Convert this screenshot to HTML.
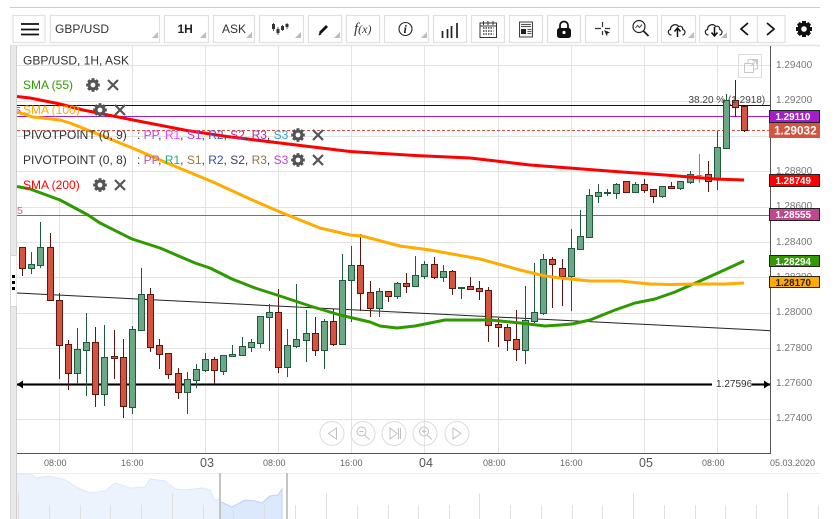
<!DOCTYPE html>
<html><head><meta charset="utf-8"><title>GBP/USD</title>
<style>
html,body{margin:0;padding:0;background:#fff;width:835px;height:519px;overflow:hidden}
svg{display:block;font-family:"Liberation Sans",sans-serif}
.b{fill:#fff;stroke:#e0e0e0;stroke-width:1.2}
.t{fill:#bbb}
.ax{font-size:10px;fill:#777}
.d{font-size:9px;fill:#666}
.D{font-size:12.5px;fill:#555}
.l{font-size:12px;fill:#333}
.p{font-size:9.8px;font-weight:bold;fill:#fff}
</style></head><body>
<svg width="835" height="519" viewBox="0 0 835 519" xmlns="http://www.w3.org/2000/svg">
<defs>
<g id="gear"><circle r="4" fill="none" stroke="currentColor" stroke-width="2.8"/><g fill="currentColor"><rect x="-1.5" y="-6.8" width="3" height="13.6"/><rect x="-1.5" y="-6.8" width="3" height="13.6" transform="rotate(45)"/><rect x="-1.5" y="-6.8" width="3" height="13.6" transform="rotate(90)"/><rect x="-1.5" y="-6.8" width="3" height="13.6" transform="rotate(135)"/></g><circle r="2.4" fill="#fff"/></g>
<path id="x" d="M-5-5L5 5M5-5L-5 5" fill="none" stroke="currentColor" stroke-width="2.2"/>
<path id="cloud" d="M-5.5 5C-9 5-10 0-6.5-.5C-6.5-5-1-7 1.5-3.5C4-4.5 6-3 5.8-.5C9 0 8.500 5 5.500 5" fill="none" stroke="#222" stroke-width="1.2"/>
</defs>
<rect width="835" height="519" fill="#fff"/>
<path d="M10 7.500H820" stroke="#ccc" stroke-width="1"/>
<path d="M10 45.500H820" stroke="#e4e4e4" stroke-width="1.500"/>

<!-- grid -->
<g stroke="#e3e3e3" stroke-width="1" fill="none">
<path d="M17 65.500H770M17 101.500H770M17 136.500H770M17 171.500H770M17 207.500H770M17 242.500H770M17 277.500H770M17 313.500H770M17 348.500H770M17 383.500H770M17 419.500H770"/>
<path d="M59.500 198V453M132.500 46V453M205.500 46V453M278.500 46V453M351.500 46V453M424.500 46V453M498.500 46V453M571.500 46V453M644.500 46V453M717.500 46V453"/>
</g>

<text x="15.500" y="114" font-size="10" fill="#a31fc9">5</text>

<!-- left band -->
<rect x="10" y="46" width="6" height="473" fill="#e9e9e9"/>
<path d="M16.500 46V519" stroke="#cfcfcf"/>
<path d="M10.500 46V519" stroke="#d8d8d8"/>
<rect x="11" y="255" width="5.500" height="51" fill="#fff"/>
<path d="M11 255.500H16M11 306.500H16" stroke="#d5d5d5"/>
<path d="M12 275h3v3h-3zM12 281h3v3h-3zM12 287h3v3h-3z" fill="#000"/>

<!-- horizontal levels -->
<path d="M17 105.500H770" stroke="#111"/>
<path d="M17 116.500H770" stroke="#a31fc9"/>
<path d="M17 130.500H770" stroke="#d9503a" stroke-dasharray="3 2"/>
<path d="M17 215.500H770" stroke="#b84a8e"/>
<text x="17" y="214" font-size="10.500" fill="#d060a0">5</text>

<!-- trend -->
<path d="M17 293L771 330.700" stroke="#222" stroke-width="1" fill="none"/>

<!-- support line -->
<path d="M17 384.500H770" stroke="#999" stroke-width="3"/>
<path d="M17 384.500H770" stroke="#000" stroke-width="1.500"/>
<path d="M17 384.500l6-4v8zM770 384.500l-6-4v8z" fill="#000"/>
<rect x="712" y="378" width="40" height="11" fill="#fff"/>
<text x="716" y="387" font-size="10" fill="#333">1.27596</text>

<!-- candles: wicks -->
<path fill="none" stroke="#1f5a3c" stroke-width="1" d="M31.500 252V274M40.500 222V268M77.500 328V384M86.500 313V396M104.500 325V406M132.500 326V414M141.500 268V330M187.500 372V414M196.500 364V388M205.500 353V372M223.500 355V375M232.500 345V357M242.500 337V356M251.500 339V352M260.500 316V348M269.500 304V351M287.500 329V377M296.500 284V348M306.500 310V362M324.500 319V369M342.500 254V344M351.500 246V322M379.500 288V317M397.500 282V299M415.500 256V286M424.500 261V279M443.500 265V282M461.500 287V299M525.500 286V364M534.500 263V323M543.500 254V315M571.500 229V311M580.500 210V249M589.500 189V237M598.500 184V203M607.500 189V196M616.500 183V199M635.500 182V192M662.500 186V198M680.500 181V190M690.500 171V184M717.500 131V190M726.500 94V148"/>
<path fill="none" stroke="#5f1510" stroke-width="1" d="M22.500 247V276M50.500 233V300M59.500 293V379M68.500 340V390M95.500 327V407M114.500 330V379M123.500 339V418M150.500 288V352M159.500 339V369M168.500 353V379M178.500 368V399M214.500 357V384M278.500 289V373M315.500 317V356M333.500 309V346M360.500 234V311M370.500 281V317M388.500 291V302M406.500 273V293M434.500 257V279M452.500 270V295M470.500 277V289M479.500 281V300M488.500 287V342M498.500 318V347M507.500 324V351M516.500 310V361M552.500 257V308M562.500 259V306M626.500 181V192M644.500 179V193M653.500 189V203M671.500 182V188M708.500 161V192M735.500 80V117M744.500 106V132"/>
<path fill="none" stroke="#888" stroke-width="1" d="M699.500 154V183M696.500 175.500h6"/>
<!-- candles: bodies -->
<path fill="#6ca786" stroke="#1f5a3c" stroke-width="1" d="M28.500 264.500h6v4h-6zM37.500 247.500h6v18h-6zM74.500 349.500h6v24h-6zM83.500 342.500h6v8h-6zM101.500 357.500h6v37h-6zM129.500 329.500h6v78h-6zM138.500 294.500h6v36h-6zM184.500 379.500h6v13h-6zM193.500 369.500h6v11h-6zM202.500 359.500h6v11h-6zM220.500 355.500h6v16h-6zM229.500 354.500h6v2h-6zM239.500 346.500h6v9h-6zM248.500 342.500h6v5h-6zM257.500 316.500h6v27h-6zM266.500 312.500h6v5h-6zM284.500 345.500h6v22h-6zM293.500 339.500h6v7h-6zM303.500 333.500h6v7h-6zM321.500 321.500h6v29h-6zM339.500 280.500h6v64h-6zM348.500 265.500h6v15h-6zM376.500 291.500h6v17h-6zM394.500 283.500h6v13h-6zM412.500 275.500h6v11h-6zM421.500 264.500h6v12h-6zM440.500 271.500h6v6h-6zM458.500 287.500h6v1h-6zM522.500 320.500h6v30h-6zM531.500 312.500h6v9h-6zM540.500 259.500h6v54h-6zM568.500 248.500h6v28h-6zM577.500 236.500h6v13h-6zM586.500 195.500h6v42h-6zM595.500 192.500h6v4h-6zM604.500 192.500h6v1h-6zM613.500 184.500h6v9h-6zM632.500 184.500h6v8h-6zM659.500 186.500h6v10h-6zM677.500 181.500h6v7h-6zM687.500 174.500h6v8h-6zM714.500 147.500h6v31h-6zM723.500 100.500h6v48h-6z"/>
<path fill="#d35440" stroke="#5f1510" stroke-width="1" d="M19.500 247.500h6v21h-6zM47.500 247.500h6v53h-6zM56.500 300.500h6v45h-6zM65.500 344.500h6v29h-6zM92.500 342.500h6v52h-6zM111.500 356.500h6v2h-6zM120.500 357.500h6v49h-6zM147.500 294.500h6v53h-6zM156.500 345.500h6v9h-6zM165.500 353.500h6v21h-6zM175.500 373.500h6v19h-6zM211.500 359.500h6v11h-6zM275.500 312.500h6v55h-6zM312.500 333.500h6v17h-6zM330.500 321.500h6v23h-6zM357.500 265.500h6v28h-6zM367.500 292.500h6v16h-6zM385.500 291.500h6v5h-6zM403.500 283.500h6v3h-6zM431.500 264.500h6v13h-6zM449.500 271.500h6v17h-6zM467.500 286.500h6v3h-6zM476.500 288.500h6v3h-6zM485.500 290.500h6v35h-6zM495.500 324.500h6v3h-6zM504.500 327.500h6v13h-6zM513.500 339.500h6v10h-6zM549.500 259.500h6v5h-6zM559.500 268.500h6v8h-6zM623.500 181.500h6v11h-6zM641.500 184.500h6v6h-6zM650.500 189.500h6v7h-6zM668.500 186.500h6v2h-6zM705.500 174.500h6v7h-6zM732.500 100.500h6v7h-6zM741.500 106.500h6v24h-6z"/>

<!-- moving averages -->
<g fill="none" stroke-width="3" stroke-linejoin="round" stroke-linecap="butt">
<path stroke="#2f9a00" d="M17 186.500L30 189L60 200L88 215L100 223L132 239L160 248L195 263L210 268L232 279L255 288L280 296L310 306L340 315L370 322L380 326L397 328L415 326L445 320L490 320L520 323L545 326L560 325L572 324L590 320L615 310L635 303L655 299L675 292L700 281L720 272L744 261"/>
<path stroke="#ffab00" d="M17 112L33 117L60 120L70 123L100 135L130 147L167 163L213 182L250 199L280 212L295 218L320 228L350 235L362 236L400 246L430 250L480 259L520 270L545 276L560 278L590 281L620 281L650 284L670 284.500L700 284L725 284L744 283"/>
<path stroke="#ff0000" d="M17 96.500L30 98L60 104L83 110L133 120L187 130.500L227 136.500L280 143L350 151.500L415 155.500L470 158L530 165L615 171.500L665 175L715 179L744 180"/>
</g>

<!-- chart frame -->
<path d="M770.500 46V453M17 453.500H771" stroke="#555" fill="none"/>

<!-- y labels -->
<g class="ax">
<text x="776" y="68">1.29400</text><text x="776" y="103">1.29200</text>
<text x="776" y="174">1.28800</text><text x="776" y="209">1.28600</text>
<text x="776" y="245">1.28400</text><text x="776" y="280">1.28200</text>
<text x="776" y="315">1.28000</text><text x="776" y="351">1.27800</text>
<text x="776" y="386">1.27600</text><text x="776" y="421">1.27400</text>
</g>

<!-- price tags -->
<rect x="769.500" y="110.500" width="50" height="12" fill="#a31fc9" stroke="#222"/>
<text x="775.500" y="120" class="p">1.29110</text>
<rect x="769" y="123" width="51" height="15" fill="#d35440"/>
<text x="774" y="134.500" font-size="11.800" font-weight="bold" fill="#fff">1.29032</text>
<rect x="769.500" y="174.500" width="50" height="12" fill="#f00" stroke="#222"/>
<text x="775.500" y="184" class="p">1.28749</text>
<rect x="769.500" y="208.500" width="50" height="12" fill="#c0488f" stroke="#222"/>
<text x="775.500" y="218" class="p">1.28555</text>
<rect x="769.500" y="255.500" width="50" height="11" fill="#339900" stroke="#222"/>
<text x="775.500" y="264.800" class="p">1.28294</text>
<rect x="769.500" y="276.500" width="50" height="11" fill="#ffab00" stroke="#222"/>
<text x="775.500" y="285.800" font-size="9.800" font-weight="bold" fill="#222">1.28170</text>

<!-- fib label -->
<text x="688.500" y="103" font-size="10" fill="#444">38.20 % (1.2918)</text>

<!-- popout -->
<rect x="738.500" y="54.500" width="23" height="23" fill="none" stroke="#ddd"/>
<g fill="none" stroke="#c8c8c8" stroke-width="1"><rect x="744.500" y="63.500" width="9" height="9"/><path d="M748 63V59.500h9.500V69H754M751 66l5-5M752.500 60.500h4v4"/></g>

<!-- legend -->
<text x="23" y="64.500" class="l">GBP/USD, 1H, ASK</text>
<text x="23" y="89" font-size="12" fill="#339900">SMA (55)</text>
<use href="#gear" x="93" y="85" color="#555"/><use href="#x" x="113" y="85" color="#555"/>
<text x="23" y="114" font-size="12" fill="#ffab00">SMA (100)</text>
<use href="#gear" x="100" y="110" color="#555"/><use href="#x" x="120" y="110" color="#555"/>
<text x="23" y="139" class="l">PIVOTPOINT (0, 9)</text>
<text x="137" y="139" class="l">: <tspan fill="#c040f0">PP</tspan>, <tspan fill="#f040f0">R1</tspan>, <tspan fill="#b040e0">S1</tspan>, <tspan fill="#5050d0">R2</tspan>, <tspan fill="#c03090">S2</tspan>, <tspan fill="#a030c0">R3</tspan>, <tspan fill="#30a0c8">S3</tspan></text>
<use href="#gear" x="298" y="135" color="#555"/><use href="#x" x="318" y="135" color="#555"/>
<text x="23" y="164" class="l">PIVOTPOINT (0, 8)</text>
<text x="137" y="164" class="l">: <tspan fill="#b85aa8">PP</tspan>, <tspan fill="#20b070">R1</tspan>, <tspan fill="#987838">S1</tspan>, <tspan fill="#3850b0">R2</tspan>, <tspan fill="#503868">S2</tspan>, <tspan fill="#987038">R3</tspan>, <tspan fill="#c040d0">S3</tspan></text>
<use href="#gear" x="298" y="160" color="#555"/><use href="#x" x="318" y="160" color="#555"/>
<text x="23" y="189" font-size="12" fill="#ff0000">SMA (200)</text>
<use href="#gear" x="100" y="185" color="#555"/><use href="#x" x="120" y="185" color="#555"/>

<!-- nav buttons -->
<g fill="none" stroke="#dcdcdc" stroke-width="1">
<circle cx="332" cy="433.500" r="12"/><circle cx="363" cy="433.500" r="12"/><circle cx="394" cy="433.500" r="12"/><circle cx="425" cy="433.500" r="12"/><circle cx="457" cy="433.500" r="12"/>
</g>
<g fill="none" stroke="#c0c0c0" stroke-width="1">
<path d="M336.500 428v11l-8-5.500z"/>
<circle cx="361.500" cy="431.500" r="4.500"/><path d="M364.500 435l5 4.500M359.500 431.500h4"/>
<path d="M390 428v11l7-5.500zM398.500 428v11M400.500 428v11"/>
<circle cx="424" cy="431.500" r="4.500"/><path d="M427 435l5 4.500M422 431.500h4M424 429.500v4"/>
<path d="M453 428v11l8-5.500z"/>
</g>

<!-- x labels -->
<g class="d"><text x="44" y="466">08:00</text><text x="121" y="466">16:00</text><text x="263" y="466">08:00</text><text x="340" y="466">16:00</text><text x="483" y="466">08:00</text><text x="560" y="466">16:00</text><text x="702" y="466">08:00</text><text x="770" y="466">05.03.2020</text></g>
<g class="D"><text x="200" y="467">03</text><text x="419" y="467">04</text><text x="639" y="467">05</text></g>
<path d="M17 473.500H820" stroke="#ececec"/>

<!-- navigator -->
<path d="M17 474L30 474L37 478L50 476L65 480L78 488L90 493L105 491L115 483L130 488L145 487L150 479L165 481L175 489L185 490L203 488L210 490L215 501L220 499V519H17Z" fill="#edf3fc" stroke="none"/>
<path d="M17 474L30 474L37 478L50 476L65 480L78 488L90 493L105 491L115 483L130 488L145 487L150 479L165 481L175 489L185 490L203 488L210 490L215 501L220 499" fill="none" stroke="#dbe7fa"/>
<path d="M221 502L232 507L245 500L255 501L262 503L270 496L278 495L282 489V519H221Z" fill="#dce8fb"/>
<path d="M221 502L232 507L245 500L255 501L262 503L270 496L278 495L282 489V519" fill="none" stroke="#b9d2f7"/>
<g stroke="#e0e0e0" fill="none"><path d="M18.500 493V519M172.500 493V519M326.500 493V519M479.500 493V519M633.500 493V519M787.500 493V519"/>
<path d="M49.500 505V519M80.500 505V519M110.500 505V519M141.500 505V519M203.500 505V519M233.500 505V519M264.500 505V519M295.500 505V519M357.500 505V519M388.500 505V519M418.500 505V519M449.500 505V519M510.500 505V519M541.500 505V519M572.500 505V519M602.500 505V519M664.500 505V519M695.500 505V519M725.500 505V519M756.500 505V519M818.500 505V519"/></g>
<path d="M220 473V519M287 473V519" stroke="#c4c4c4" stroke-width="2"/>

<!-- toolbar -->
<rect x="13" y="15.500" width="32" height="27" class="b"/>
<path d="M21 24h18M21 29.500h18M21 34.500h18" stroke="#111" stroke-width="1.700"/>
<rect x="50.500" y="15.500" width="109" height="27" class="b"/><path class="t" d="M158 38v-6l-6 6z"/>
<text x="55" y="33" class="l">GBP/USD</text>
<rect x="164.500" y="15.500" width="44" height="27" class="b"/><path class="t" d="M206 38v-6l-6 6z"/>
<text x="177.500" y="33" font-size="12" font-weight="bold" fill="#222">1H</text>
<rect x="213.500" y="15.500" width="41" height="27" class="b"/><path class="t" d="M252 38v-6l-6 6z"/>
<text x="222" y="33" class="l">ASK</text>
<rect x="259.500" y="15.500" width="44" height="27" class="b"/><path class="t" d="M301 38v-6l-6 6z"/>
<path d="M273.500 23v8M278 27v8M282.500 25v6M287 23v6" stroke="#555" stroke-width="1"/><path d="M272 24h3v5h-3zM276.500 29h3v4h-3zM281 26h3v4h-3zM285.500 24h3v3h-3z" fill="#333"/>
<rect x="308.500" y="15.500" width="33" height="27" class="b"/><path class="t" d="M340 38v-6l-6 6z"/>
<path d="M320 33l7-7" stroke="#111" stroke-width="2.800"/><path d="M318.500 35.500l1-3 2 2z" fill="#111"/>
<rect x="346.500" y="15.500" width="33" height="27" class="b"/>
<text x="354" y="33" font-family="Liberation Serif" font-style="italic" font-size="15" fill="#333">f<tspan font-size="12">(x)</tspan></text>
<rect x="384.500" y="15.500" width="44" height="27" class="b"/><path class="t" d="M427 38v-6l-6 6z"/>
<circle cx="405.500" cy="29" r="6.500" fill="none" stroke="#222" stroke-width="1.100"/>
<text x="403.500" y="33" font-family="Liberation Serif" font-style="italic" font-weight="bold" font-size="12" fill="#222">i</text>
<rect x="433.500" y="15.500" width="33" height="27" class="b"/>
<path d="M442.500 31v7M447.500 29v9M451.500 26v12M457 23v15" stroke="#222" stroke-width="1.700"/>
<rect x="471.500" y="15.500" width="33" height="27" class="b"/>
<rect x="480" y="23" width="16.500" height="14.500" fill="none" stroke="#333"/><path d="M480 26h16.500" stroke="#333"/>
<path d="M483.500 21v4M488 21v4M493 21v4" stroke="#333"/>
<path d="M483 28h10.500M483 31h10.500M483 34h10.500" stroke="#444" stroke-width="1.500" stroke-dasharray="1.500 1"/>
<rect x="509.500" y="15.500" width="33" height="27" class="b"/>
<rect x="519.500" y="22" width="13" height="15" fill="#f3f3f3" stroke="#444"/><path d="M521 24.500h10M521 26.500h10" stroke="#555"/><rect x="521" y="29" width="5" height="5" fill="#222"/><path d="M527.500 29.500h4M527.500 31.500h4M527.500 33.500h4" stroke="#555"/>
<rect x="547.500" y="15.500" width="33" height="27" class="b"/>
<path d="M560 29v-3.500a4 4 0 0 1 8 0V29" fill="none" stroke="#111" stroke-width="1.800"/><rect x="557" y="28" width="14" height="10" rx="2.500" fill="#111"/><circle cx="564" cy="32.500" r="1.600" fill="#fff"/>
<rect x="585.500" y="15.500" width="33" height="27" class="b"/>
<path d="M595 28.500h6M605 28.500h5M602.500 22v5M602.500 31v4" stroke="#333" stroke-width="1.200"/><path d="M604 30l6 2.500-2.500 1-.5 3z" fill="#222"/>
<rect x="623.500" y="15.500" width="34" height="27" class="b"/>
<circle cx="639" cy="26.500" r="6" fill="none" stroke="#222" stroke-width="1.200"/><path d="M643.500 31l5 5" stroke="#222" stroke-width="1.800"/><path d="M635.500 28l2-2.500 2 2 2.500-3" fill="none" stroke="#444"/>
<rect x="661.500" y="15.500" width="34" height="27" class="b"/><path class="t" d="M694 38v-6l-6 6z"/>
<use href="#cloud" x="677" y="30"/><path d="M677.500 37v-8M674.500 31.500l3-3.500 3 3.500" fill="none" stroke="#111" stroke-width="1.500"/>
<rect x="699.500" y="15.500" width="31" height="27" class="b"/><path class="t" d="M727 38v-6l-6 6z"/>
<use href="#cloud" x="714" y="30"/><path d="M714.500 27v8M711.500 32.500l3 3.500 3-3.500" fill="none" stroke="#111" stroke-width="1.500"/>
<rect x="730.500" y="15.500" width="27" height="27" class="b"/><rect x="757.500" y="15.500" width="27.500" height="27" class="b"/>
<path d="M748 23l-7 6 7 6M767 23l7 6-7 6" fill="none" stroke="#111" stroke-width="1.700"/>
<g transform="translate(804 29)"><circle r="4.800" fill="none" stroke="#111" stroke-width="3.400"/><g fill="#111"><rect x="-2" y="-8" width="4" height="16"/><rect x="-2" y="-8" width="4" height="16" transform="rotate(45)"/><rect x="-2" y="-8" width="4" height="16" transform="rotate(90)"/><rect x="-2" y="-8" width="4" height="16" transform="rotate(135)"/></g><circle r="2.800" fill="#fff"/></g>
</svg>
</body></html>
